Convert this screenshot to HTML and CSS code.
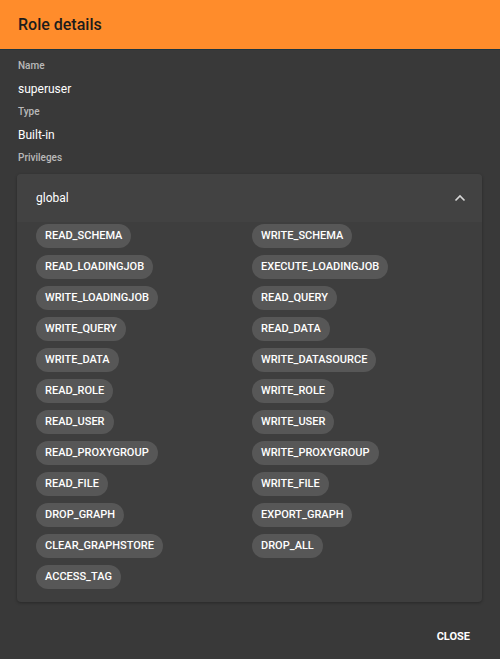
FILE: index.html
```html
<!DOCTYPE html>
<html>
<head>
<meta charset="utf-8">
<link rel="stylesheet" href="styles.css">
</head>
<body>
<div class="dialog">
  <header class="title">Role details</header>
  <div class="content">
    <div class="label">Name</div>
    <div class="value">superuser</div>
    <div class="label">Type</div>
    <div class="value">Built-in</div>
    <div class="label">Privileges</div>
    <div class="panel">
      <div class="panel-head">
        <span>global</span>
        <svg class="chev" width="12" height="8" viewBox="0 0 12 8"><path d="M1.5 6.5 L6 2 L10.5 6.5" fill="none" stroke="#d8d8d8" stroke-width="1.6"/></svg>
      </div>
      <div class="chips">
        <div class="cell"><span class="chip">READ_SCHEMA</span></div>
        <div class="cell"><span class="chip">WRITE_SCHEMA</span></div>
        <div class="cell"><span class="chip">READ_LOADINGJOB</span></div>
        <div class="cell"><span class="chip">EXECUTE_LOADINGJOB</span></div>
        <div class="cell"><span class="chip">WRITE_LOADINGJOB</span></div>
        <div class="cell"><span class="chip">READ_QUERY</span></div>
        <div class="cell"><span class="chip">WRITE_QUERY</span></div>
        <div class="cell"><span class="chip">READ_DATA</span></div>
        <div class="cell"><span class="chip">WRITE_DATA</span></div>
        <div class="cell"><span class="chip">WRITE_DATASOURCE</span></div>
        <div class="cell"><span class="chip">READ_ROLE</span></div>
        <div class="cell"><span class="chip">WRITE_ROLE</span></div>
        <div class="cell"><span class="chip">READ_USER</span></div>
        <div class="cell"><span class="chip">WRITE_USER</span></div>
        <div class="cell"><span class="chip">READ_PROXYGROUP</span></div>
        <div class="cell"><span class="chip">WRITE_PROXYGROUP</span></div>
        <div class="cell"><span class="chip">READ_FILE</span></div>
        <div class="cell"><span class="chip">WRITE_FILE</span></div>
        <div class="cell"><span class="chip">DROP_GRAPH</span></div>
        <div class="cell"><span class="chip">EXPORT_GRAPH</span></div>
        <div class="cell"><span class="chip">CLEAR_GRAPHSTORE</span></div>
        <div class="cell"><span class="chip">DROP_ALL</span></div>
        <div class="cell"><span class="chip">ACCESS_TAG</span></div>
      </div>
    </div>
  </div>
  <div class="actions">
    <button class="close">CLOSE</button>
  </div>
</div>
</body>
</html>
```

FILE: styles.css
```css
html, body {
  margin: 0;
  padding: 0;
  background: #393939;
  font-family: Roboto, "Liberation Sans", sans-serif;
}
.dialog {
  width: 500px;
  height: 659px;
  display: flex;
  flex-direction: column;
}
.title {
  height: 49px;
  background: #ff8c2b;
  border-bottom: 1px solid #1e3440;
  box-sizing: content-box;
  color: #1c1c1c;
  font-size: 16px;
  font-weight: 500;
  line-height: 49px;
  padding-left: 18px;
}
.content {
  padding: 7px 18px 0 17px;
}
.label {
  font-size: 10px;
  color: #b9b9b9;
  font-weight: 500;
  height: 23px;
  line-height: 18px;
  padding-left: 1px;
}
.value {
  font-size: 12px;
  color: #ffffff;
  height: 23px;
  line-height: 18px;
  padding-left: 1px;
}
.panel {
  margin-top: 2px;
  background: #3e3e3e;
  border-radius: 4px;
  box-shadow: 0 1px 3px rgba(0,0,0,0.3);
  padding-bottom: 13px;
}
.panel-head {
  height: 48px;
  background: #424242;
  border-radius: 4px 4px 0 0;
  display: flex;
  align-items: center;
  justify-content: space-between;
  padding: 0 16px 0 19px;
  color: #ffffff;
  font-size: 12px;
}
.chev {
  display: block;
}
.chips {
  display: grid;
  grid-template-columns: 216px 1fr;
  row-gap: 7px;
  padding: 2px 18px 0 19px;
}
.cell {
  display: flex;
}
.chip {
  display: inline-block;
  height: 24px;
  line-height: 24px;
  padding: 0 9px;
  border-radius: 12px;
  background: #575757;
  color: #ffffff;
  font-size: 11px;
  font-weight: 500;
  white-space: nowrap;
}
.actions {
  display: flex;
  justify-content: flex-end;
  padding: 24px 22px 0 0;
}
.close {
  background: none;
  border: none;
  color: #ffffff;
  font-family: Roboto, "Liberation Sans", sans-serif;
  font-size: 11px;
  font-weight: 700;
  padding: 4px 8px;
  margin-top: 0;
}
```
